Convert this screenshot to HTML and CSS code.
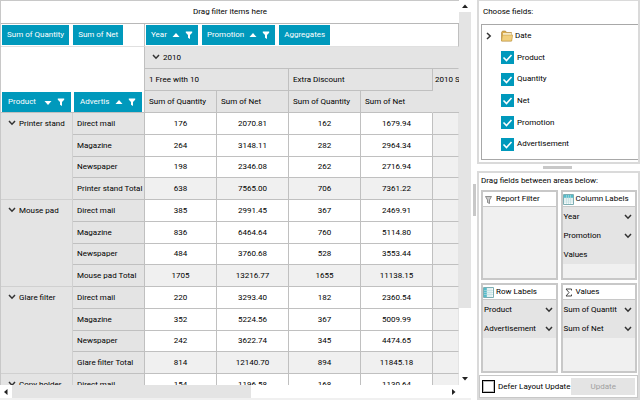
FILE: index.html
```html
<!DOCTYPE html>
<html lang="en">
<head>
<meta charset="utf-8">
<title>Pivot grid</title>
<link rel="stylesheet" href="styles.css">
</head>
<body>
<svg class="defs" aria-hidden="true">
  <symbol id="down" viewBox="0 0 8 6"><path d="M1 1l3 3.200L7 1" fill="none" stroke="#333" stroke-width="1.500"/></symbol>
  <symbol id="right" viewBox="0 0 6 8"><path d="M1 1l3.200 3L1 7" fill="none" stroke="#333" stroke-width="1.500"/></symbol>
  <symbol id="asc" viewBox="0 0 8 8"><path d="M.5 6L4 2l3.500 4z" fill="#fff"/></symbol>
  <symbol id="desc" viewBox="0 0 8 8"><path d="M.5 3L4 7l3.500-4z" fill="#fff"/></symbol>
  <symbol id="funnel" viewBox="0 0 8 8"><path d="M.8 .5h6.400v1.300L5 4v4L3 6.800V4L.8 1.800z" fill="#fff"/></symbol>
  <symbol id="check" viewBox="0 0 13 13"><path d="M2.500 6.500l3 3 5-5.500" fill="none" stroke="#fff" stroke-width="1.600"/></symbol>
</svg>
<div class="app">
  <main class="pivot">
    <div class="view">
      <div class="filter-area">Drag filter items here</div>
      <table class="grid">
        <colgroup><col class="c"><col class="c"><col class="c"><col class="c"><col class="c"><col class="c"><col></colgroup>
        <thead>
          <tr class="zones">
            <td colspan="2"><div class="chips"><button class="chip">Sum of Quantity</button><button class="chip">Sum of Net</button></div></td>
            <td colspan="5"><div class="chips"><button class="chip">Year<svg><use href="#asc"/></svg><svg><use href="#funnel"/></svg></button><button class="chip">Promotion<svg><use href="#asc"/></svg><svg><use href="#funnel"/></svg></button><button class="chip">Aggregates</button></div></td>
          </tr>
          <tr>
            <td class="blank" colspan="2" rowspan="2"></td>
            <th class="year" colspan="5"><button class="toggle" aria-label="Collapse 2010"><svg><use href="#down"/></svg></button>2010</th>
          </tr>
          <tr><th colspan="2">1 Free with 10</th><th colspan="2">Extra Discount</th><th rowspan="2" class="sum">2010 S</th></tr>
          <tr>
            <td class="zone"><button class="chip fill">Product<svg class="push"><use href="#desc"/></svg><svg><use href="#funnel"/></svg></button></td>
            <td class="zone last"><button class="chip fill">Advertis<svg class="push"><use href="#asc"/></svg><svg><use href="#funnel"/></svg></button></td>
            <th>Sum of Quantity</th><th>Sum of Net</th><th>Sum of Quantity</th><th>Sum of Net</th>
          </tr>
        </thead>
        <tbody>
          <tr><th class="group" rowspan="4"><button class="toggle" aria-label="Collapse Printer stand"><svg><use href="#down"/></svg></button>Printer stand</th><th>Direct mail</th><td>176</td><td>2070.81</td><td>162</td><td>1679.94</td><td></td></tr>
          <tr><th>Magazine</th><td>264</td><td>3148.11</td><td>282</td><td>2964.34</td><td></td></tr>
          <tr class="short"><th>Newspaper</th><td>198</td><td>2346.08</td><td>262</td><td>2716.94</td><td></td></tr>
          <tr class="total"><th>Printer stand Total</th><td>638</td><td>7565.00</td><td>706</td><td>7361.22</td><td></td></tr>
        </tbody>
        <tbody>
          <tr><th class="group" rowspan="4"><button class="toggle" aria-label="Collapse Mouse pad"><svg><use href="#down"/></svg></button>Mouse pad</th><th>Direct mail</th><td>385</td><td>2991.45</td><td>367</td><td>2469.91</td><td></td></tr>
          <tr><th>Magazine</th><td>836</td><td>6464.64</td><td>760</td><td>5114.80</td><td></td></tr>
          <tr class="short"><th>Newspaper</th><td>484</td><td>3760.68</td><td>528</td><td>3553.44</td><td></td></tr>
          <tr class="total"><th>Mouse pad Total</th><td>1705</td><td>13216.77</td><td>1655</td><td>11138.15</td><td></td></tr>
        </tbody>
        <tbody>
          <tr><th class="group" rowspan="4"><button class="toggle" aria-label="Collapse Glare filter"><svg><use href="#down"/></svg></button>Glare filter</th><th>Direct mail</th><td>220</td><td>3293.40</td><td>182</td><td>2360.54</td><td></td></tr>
          <tr><th>Magazine</th><td>352</td><td>5224.56</td><td>367</td><td>5009.99</td><td></td></tr>
          <tr class="short"><th>Newspaper</th><td>242</td><td>3622.74</td><td>345</td><td>4474.65</td><td></td></tr>
          <tr class="total"><th>Glare filter Total</th><td>814</td><td>12140.70</td><td>894</td><td>11845.18</td><td></td></tr>
        </tbody>
        <tbody>
          <tr><th class="group"><button class="toggle" aria-label="Collapse Copy holder"><svg><use href="#down"/></svg></button>Copy holder</th><th>Direct mail</th><td>154</td><td>1196.58</td><td>168</td><td>1130.64</td><td></td></tr>
        </tbody>
      </table>
    </div>
    <div class="vbar">
      <button aria-label="Scroll up"><svg viewBox="0 0 12 12"><path d="M3 8l3-3.500L9 8z"/></svg></button>
      <div class="track"><div class="thumb"></div></div>
      <button aria-label="Scroll down"><svg viewBox="0 0 12 12"><path d="M3 4l3 3.500L9 4z"/></svg></button>
    </div>
    <div class="hbar">
      <button aria-label="Scroll left"><svg viewBox="0 0 12 12"><path d="M7.500 3L4 6l3.500 3z"/></svg></button>
      <div class="track"><div class="thumb"></div></div>
      <button aria-label="Scroll right"><svg viewBox="0 0 12 12"><path d="M5 3l3.500 3L5 9z"/></svg></button>
    </div>
  </main>
  <div class="splitter"><span></span></div>
  <aside class="side">
    <section class="panel fields">
      <h2>Choose fields:</h2>
      <div class="tree">
        <div class="node"><button class="toggle" aria-label="Expand Date"><svg><use href="#right"/></svg></button><svg class="folder" viewBox="0 0 12 12"><path d="M.5 2.500L1.500 1h3l1 1.500h5V11H.5z" fill="#d9ab4c" stroke="#a98136" stroke-width=".6"/><path d="M2 3.200h8.500v4H2z" fill="#fff8df"/><path d="M.5 11l1-6h10.200l-1 6z" fill="#f1cf7c" stroke="#c49a43" stroke-width=".6"/></svg>Date</div>
        <label class="node"><input type="checkbox" checked><svg class="box"><use href="#check"/></svg>Product</label>
        <label class="node"><input type="checkbox" checked><svg class="box"><use href="#check"/></svg>Quantity</label>
        <label class="node"><input type="checkbox" checked><svg class="box"><use href="#check"/></svg>Net</label>
        <label class="node"><input type="checkbox" checked><svg class="box"><use href="#check"/></svg>Promotion</label>
        <label class="node"><input type="checkbox" checked><svg class="box"><use href="#check"/></svg>Advertisement</label>
      </div>
    </section>
    <div class="hsplit"><span></span></div>
    <section class="panel areas">
      <h2>Drag fields between areas below:</h2>
      <div class="boxes">
        <div class="area">
          <h3><svg viewBox="0 0 11 11"><path d="M2.500 2.500h6L6.500 6v3.500l-2-1V6z" fill="#ccc" stroke="#777" stroke-width=".8"/></svg>Report Filter</h3>
        </div>
        <div class="area">
          <h3><svg viewBox="0 0 11 11"><path d="M.5 .5h10v10H.5z" fill="#f4fafa" stroke="#7daeb3"/><path d="M1 1h9v3H1z" fill="#54bccb"/><path d="M1 4h9M1 6h9M1 8h9M3.500 1v9M5.500 1v9M7.500 1v9" stroke="#b9dadd" stroke-width=".6"/></svg>Column Labels</h3>
          <ul>
            <li>Year<button class="toggle" aria-label="Year options"><svg><use href="#down"/></svg></button></li>
            <li>Promotion<button class="toggle" aria-label="Promotion options"><svg><use href="#down"/></svg></button></li>
            <li>Values</li>
          </ul>
        </div>
        <div class="area">
          <h3><svg viewBox="0 0 11 11"><path d="M.5 .5h10v10H.5z" fill="#f4fafa" stroke="#7daeb3"/><path d="M1 1h3v9H1z" fill="#54bccb"/><path d="M1 3.500h9M1 5.500h9M1 7.500h9M4 1v9M6 1v9M8 1v9" stroke="#b9dadd" stroke-width=".6"/></svg>Row Labels</h3>
          <ul>
            <li>Product<button class="toggle" aria-label="Product options"><svg><use href="#down"/></svg></button></li>
            <li>Advertisement<button class="toggle" aria-label="Advertisement options"><svg><use href="#down"/></svg></button></li>
          </ul>
        </div>
        <div class="area">
          <h3><svg viewBox="0 0 11 11"><path d="M8.500 3.500V2H3l3 3.500L3 9h5.500V7.500" fill="none" stroke="#333" stroke-width=".9"/></svg>Values</h3>
          <ul>
            <li>Sum of Quantit<button class="toggle" aria-label="Sum of Quantity options"><svg><use href="#down"/></svg></button></li>
            <li>Sum of Net<button class="toggle" aria-label="Sum of Net options"><svg><use href="#down"/></svg></button></li>
          </ul>
        </div>
      </div>
      <div class="footer">
        <label><input type="checkbox">Defer Layout Update</label>
        <button class="update" disabled>Update</button>
      </div>
    </section>
  </aside>
</div>
</body>
</html>
```
FILE: styles.css
```css
* { box-sizing: border-box; }
body {
  margin: 0;
  background: #fff;
  color: #000;
  font: 8px/12px Roboto, "Open Sans", sans-serif;
}
button, input { font: inherit; margin: 0; padding: 0; border: 0; background: none; }
h2, h3, ul { margin: 0; padding: 0; font: inherit; list-style: none; }
svg { display: block; flex: none; }
.defs { position: absolute; width: 0; height: 0; }

.app {
  display: grid;
  grid-template: minmax(0, 1fr) / minmax(0, 1fr) 6px 163px;
  height: 100vh;
}

/* Pivot grid */
.pivot {
  display: grid;
  grid-template: minmax(0, 1fr) 13px / minmax(0, 1fr) 12px;
  border-bottom: 2px solid #f0f0f0;
}
.view {
  overflow: hidden;
  border: solid #c8c8c8;
  border-width: 1px 0 0 1px;
}
.filter-area {
  height: 23px;
  padding-top: 5px;
  border-bottom: 1px solid #b8b8b8;
  text-align: center;
}
.grid { width: 100%; table-layout: fixed; border-collapse: separate; border-spacing: 0; }
.c { width: 72px; }
.grid th, .grid td {
  height: 22px;
  padding: 0 4px;
  border: solid #c0c0c0;
  border-width: 0 1px 1px 0;
  overflow: hidden;
  white-space: nowrap;
  font-weight: normal;
  text-align: center;
}
.grid th { padding-right: 0; background: #e4e4e4; text-align: left; }
.grid tr > :last-child { border-right-color: #e4e4e4; }
.grid .short th, .grid .short td { height: 21px; }
.grid .total td, .grid tbody td:last-child { background: #f0f0f0; }
.grid .group { padding: 5px 0 5px 7px; vertical-align: top; border-color: #d0d0d0; }
.grid .zones td { height: 23px; padding: 0 1px; border-bottom-color: #e0e0e0; }
.grid .zones td:last-child { border-right: 1px solid #c0c0c0; }
.grid .blank { border-bottom: 0; }
.grid .zone { padding: 0 2px 0 1px; border-right: 0; }
.grid .last { border-right: 1px solid #c0c0c0; }
.grid .sum { padding: 5px 0 5px 2px; border-right: 0; vertical-align: top; }
.grid .year { padding-left: 7px; }
.toggle svg { width: 8px; height: 6px; }
.grid .toggle { display: inline-block; margin-right: 3px; }
.chips { display: flex; gap: 4px; }
.chip {
  display: flex;
  align-items: center;
  gap: 5px;
  height: 20px;
  padding: 0 5px;
  background: #0099bc;
  color: #fff;
}
.chip svg { width: 8px; height: 8px; }
.fill { width: 100%; padding: 0 6px; }
.push { margin-left: auto; }

/* Scroll bars */
.vbar, .hbar { display: flex; background: #fff; }
.vbar { flex-direction: column; }
.vbar svg, .hbar svg { width: 12px; height: 12px; fill: #222; }
.track { display: flex; flex: 1; }
.vbar .track { flex-direction: column; }
.thumb { background: #e4e4e4; }
.vbar .thumb { height: 82%; }
.hbar .thumb { width: 55%; }

.splitter { display: flex; align-items: center; justify-content: center; }
.splitter span { width: 3px; height: 32px; background: #c8c8c8; }

/* Field chooser */
.side { display: flex; flex-direction: column; }
.panel { border: 2px solid #dadada; background: #fff; }
.panel h2 { white-space: nowrap; }
.fields { border-top-width: 1px; padding-bottom: 2px; }
.fields h2 { padding: 5px 4px 6px; }
.tree {
  display: flex;
  flex-direction: column;
  height: 136px;
  margin-left: 2px;
  padding-bottom: 4px;
  border: 1px solid #a8a8a8;
  border-right: 0;
}
.node { display: flex; flex: 1; align-items: center; padding-left: 19px; }
.node .toggle { margin: 0 9px 0 -15px; }
.node .toggle svg { width: 6px; height: 8px; }
.folder { width: 12px; height: 12px; margin-right: 2px; }
.node input { appearance: none; width: 13px; height: 13px; background: #0099bc; }
.box { width: 13px; height: 13px; margin: 0 3px 0 -13px; pointer-events: none; }
.hsplit { display: flex; justify-content: center; padding: 2px 0; }
.hsplit span { width: 29px; height: 3px; margin-right: 2px; background: #c8c8c8; }
.areas { display: flex; flex: 1; flex-direction: column; min-height: 0; }
.areas h2 { padding: 2px 2px 3px; }
.boxes {
  display: grid;
  flex: 1;
  grid-template: 1fr 1fr / 1fr 1fr;
  gap: 3px;
  padding: 0 1px 2px 2px;
}
.area { min-width: 0; border: 2px solid #c8c8c8; background: #f0f0f0; }
.area h3 {
  display: flex;
  align-items: center;
  gap: 2px;
  height: 15px;
  border-bottom: 1px solid #c8c8c8;
  background: #fff;
  white-space: nowrap;
}
.area h3 svg { width: 11px; height: 11px; }
.area li {
  display: flex;
  align-items: center;
  justify-content: space-between;
  height: 19px;
  padding: 0 3px 0 1px;
  background: #e4e4e4;
  white-space: nowrap;
}
.area .toggle { flex: none; }
.footer {
  display: flex;
  align-items: center;
  gap: 1px;
  height: 23px;
  padding: 0 2px;
  border: 1px solid #c8c8c8;
}
.footer label { display: flex; align-items: center; gap: 3px; white-space: nowrap; }
.footer input { appearance: none; width: 13px; height: 13px; border: 1px solid #000; outline: 1px solid #0004; outline-offset: -2px; }
.update { flex: 1; height: 17px; background: #e4e4e4; color: #a0a0a0; }
```
